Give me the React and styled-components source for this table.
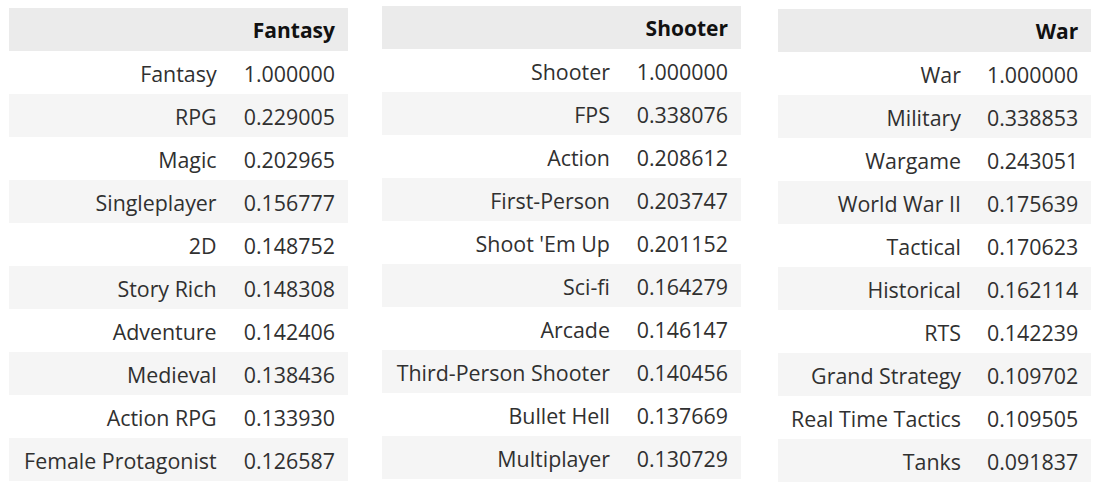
import React from 'react';
import styled, { createGlobalStyle } from 'styled-components';

const GlobalStyle = createGlobalStyle`
  html, body {
    margin: 0;
    padding: 0;
    background: #ffffff;
  }
  body {
    font-family: 'Open Sans', 'Noto Sans', sans-serif;
    color: #303030;
  }
`;

const Page = styled.div`
  display: flex;
  align-items: flex-start;
  padding-left: 9px;
  width: 1100px;
  height: 496px;
  box-sizing: border-box;
  overflow: hidden;
`;

const Table = styled.table`
  border-collapse: collapse;
  border-spacing: 0;
  margin-top: ${p => p.$top}px;
  margin-right: ${p => p.$gap || 0}px;
  width: ${p => p.$width}px;
  flex: none;
  font-size: 21.4px;
`;

const HeadRow = styled.tr`
  background: #ebebeb;
  height: 43px;
`;

const HeadCell = styled.th`
  text-align: right;
  font-weight: 700;
  font-size: 21px;
  color: #111;
  padding: 0 13px 0 13px;
  white-space: nowrap;
`;

const Row = styled.tr`
  height: 43px;
  background: ${p => (p.$odd ? '#f5f5f5' : '#ffffff')};
`;

const Cell = styled.td`
  text-align: right;
  padding: 2px 13px 0 13px;
  white-space: nowrap;
  line-height: 1;
`;

const tables = [
  {
    title: 'Fantasy',
    top: 8,
    width: 339,
    gap: 34,
    rows: [
      ['Fantasy', '1.000000'],
      ['RPG', '0.229005'],
      ['Magic', '0.202965'],
      ['Singleplayer', '0.156777'],
      ['2D', '0.148752'],
      ['Story Rich', '0.148308'],
      ['Adventure', '0.142406'],
      ['Medieval', '0.138436'],
      ['Action RPG', '0.133930'],
      ['Female Protagonist', '0.126587'],
    ],
  },
  {
    title: 'Shooter',
    top: 6,
    width: 359,
    gap: 37,
    rows: [
      ['Shooter', '1.000000'],
      ['FPS', '0.338076'],
      ['Action', '0.208612'],
      ['First-Person', '0.203747'],
      ["Shoot 'Em Up", '0.201152'],
      ['Sci-fi', '0.164279'],
      ['Arcade', '0.146147'],
      ['Third-Person Shooter', '0.140456'],
      ['Bullet Hell', '0.137669'],
      ['Multiplayer', '0.130729'],
    ],
  },
  {
    title: 'War',
    top: 9,
    width: 312,
    gap: 0,
    rows: [
      ['War', '1.000000'],
      ['Military', '0.338853'],
      ['Wargame', '0.243051'],
      ['World War II', '0.175639'],
      ['Tactical', '0.170623'],
      ['Historical', '0.162114'],
      ['RTS', '0.142239'],
      ['Grand Strategy', '0.109702'],
      ['Real Time Tactics', '0.109505'],
      ['Tanks', '0.091837'],
    ],
  },
];

const CorrTable = ({ data }) => (
  <Table $top={data.top} $width={data.width} $gap={data.gap}>
    <thead>
      <HeadRow>
        <HeadCell />
        <HeadCell>{data.title}</HeadCell>
      </HeadRow>
    </thead>
    <tbody>
      {data.rows.map(([tag, value], i) => (
        <Row key={tag} $odd={i % 2 === 1}>
          <Cell>{tag}</Cell>
          <Cell>{value}</Cell>
        </Row>
      ))}
    </tbody>
  </Table>
);

const App = () => (
  <>
    <GlobalStyle />
    <Page>
      {tables.map(t => (
        <CorrTable key={t.title} data={t} />
      ))}
    </Page>
  </>
);

export default App;
